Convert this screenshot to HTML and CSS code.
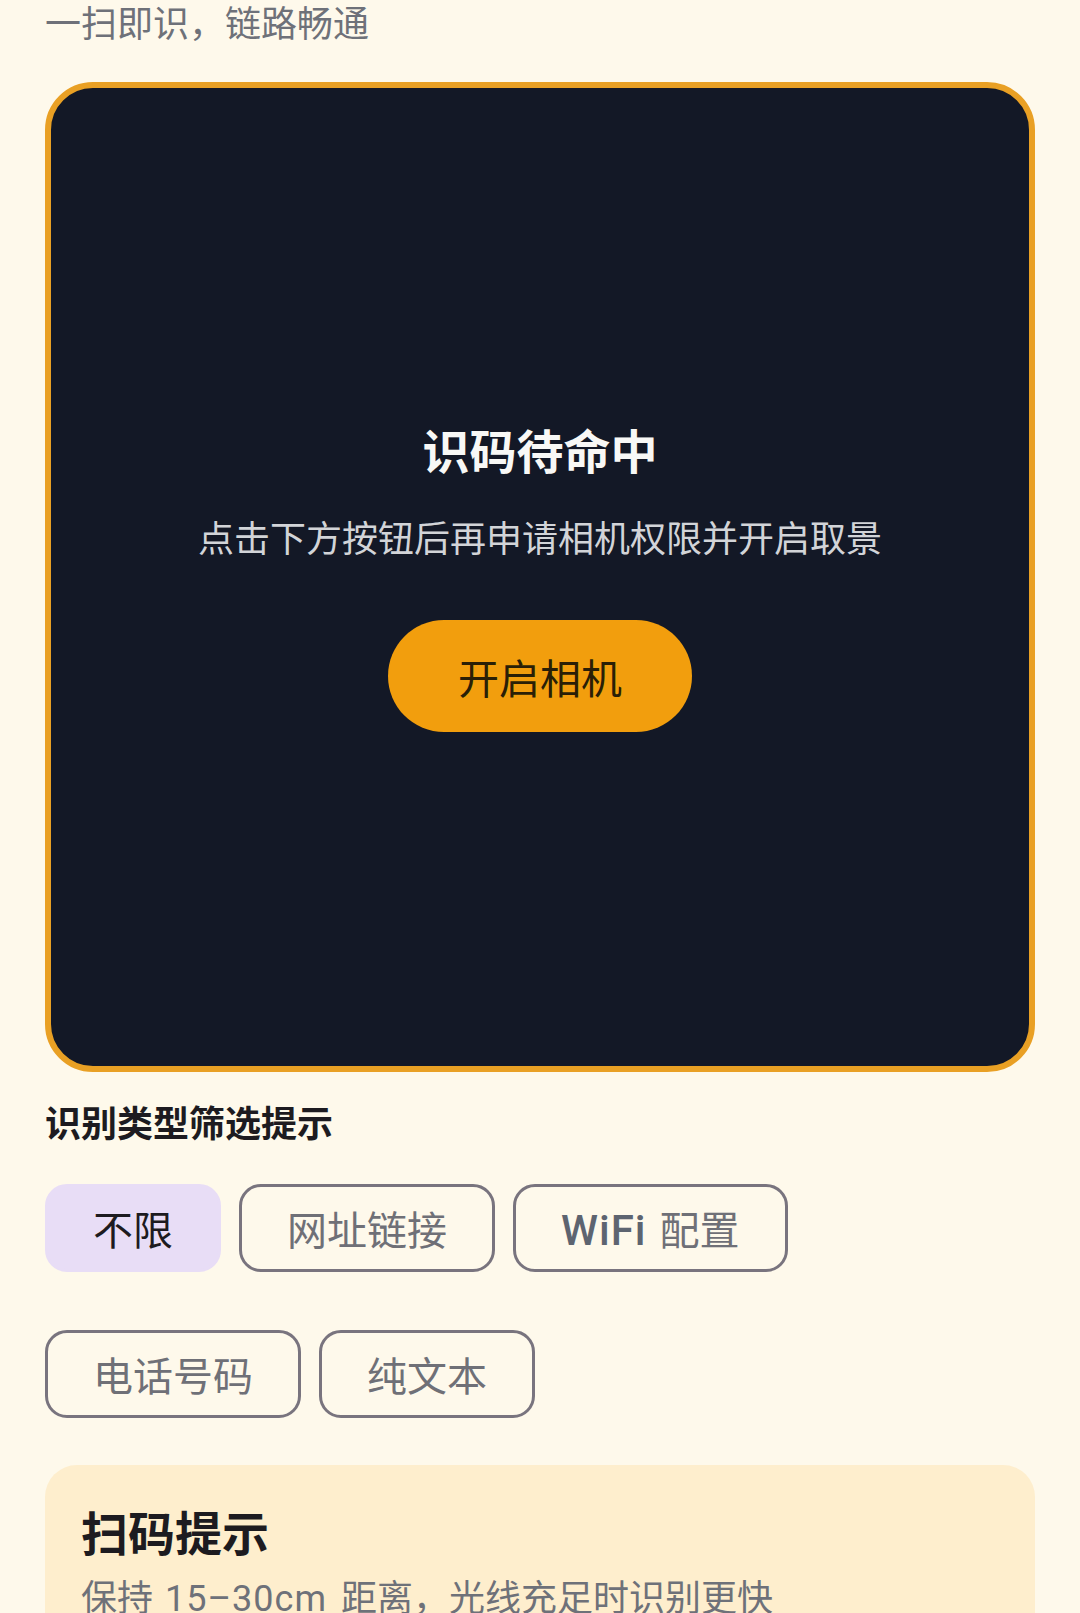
FILE: index.html
```html
<!DOCTYPE html>
<html lang="zh-CN">
<head>
<meta charset="utf-8">
<title>扫码</title>
<link rel="stylesheet" href="styles.css">
</head>
<body>
<main class="page">
  <p class="tagline">一扫即识，链路畅通</p>

  <section class="scanner">
    <div class="scanner-body">
      <h2 class="scanner-title">识码待命中</h2>
      <p class="scanner-desc">点击下方按钮后再申请相机权限并开启取景</p>
      <button class="camera-btn">开启相机</button>
    </div>
  </section>

  <h3 class="filter-label">识别类型筛选提示</h3>
  <div class="chips">
    <span class="chip chip-selected"><span class="chip-label">不限</span></span>
    <span class="chip"><span class="chip-label">网址链接</span></span>
    <span class="chip"><span class="chip-label"><span class="latin">WiFi</span>配置</span></span>
    <span class="chip"><span class="chip-label">电话号码</span></span>
    <span class="chip"><span class="chip-label">纯文本</span></span>
  </div>

  <section class="tips">
    <h3 class="tips-title">扫码提示</h3>
    <p class="tips-text">保持<span class="num">15–30cm</span>距离，光线充足时识别更快</p>
  </section>
</main>
</body>
</html>
```

FILE: styles.css
```css
html, body {
  margin: 0;
  padding: 0;
  background: #fef9eb;
}

body {
  font-family: Roboto, "Noto Sans CJK SC", sans-serif;
  overflow: hidden;
}

.page {
  padding: 3px 45px 0 45px;
  display: flex;
  flex-direction: column;
}

.tagline {
  margin: 0;
  font-size: 36px;
  line-height: 44px;
  color: #6e7179;
}

.scanner {
  margin-top: 35px;
  aspect-ratio: 1 / 1;
  box-sizing: border-box;
  border: 6px solid #e9a024;
  border-radius: 48px;
  background: #131826;
  display: flex;
  align-items: center;
  justify-content: center;
}

.scanner-body {
  display: flex;
  flex-direction: column;
  align-items: center;
}

.scanner-title {
  margin: 0;
  font-size: 47px;
  line-height: 60px;
  font-weight: 700;
  color: #f8f8f6;
}

.scanner-desc {
  margin: 33px 0 0;
  font-size: 36px;
  line-height: 48px;
  color: #d2d4d8;
}

.camera-btn {
  margin-top: 56px;
  height: 112px;
  padding: 0 70px;
  border: none;
  border-radius: 56px;
  background: #f29e0d;
  color: #2a1f06;
  font-family: Roboto, "Noto Sans CJK SC", sans-serif;
  font-size: 41px;
  font-weight: 400;
}

.filter-label {
  margin: 29px 0 0;
  font-size: 36px;
  line-height: 48px;
  font-weight: 700;
  color: #1d1b20;
}

.chips {
  margin-top: 35px;
  display: flex;
  flex-wrap: wrap;
  column-gap: 18px;
  row-gap: 58px;
}

.chip {
  box-sizing: border-box;
  height: 88px;
  padding: 0 45px;
  border: 3px solid #79747e;
  border-radius: 22px;
  display: inline-flex;
  align-items: center;
  font-size: 40px;
  color: #6f7077;
}

.chip-label {
  white-space: nowrap;
}

.chip .latin {
  font-size: 42px;
  font-weight: 500;
  letter-spacing: 1px;
  color: #5d6470;
  margin-right: 13px;
}

.chip-selected {
  background: #e8ddf6;
  border-color: #e8ddf6;
  color: #1d1b20;
}

.tips {
  margin-top: 47px;
  padding: 40px 36px 40px;
  border-radius: 32px;
  background: #feeecd;
}

.tips-title {
  margin: 0;
  font-size: 47px;
  line-height: 60px;
  font-weight: 700;
  color: #1d1b20;
}

.tips-text {
  margin: 10px 0 0;
  font-size: 36px;
  line-height: 48px;
  color: #6e7179;
  white-space: nowrap;
}

.tips-text .num {
  letter-spacing: 1px;
  margin: 0 14px 0 12px;
}
```
